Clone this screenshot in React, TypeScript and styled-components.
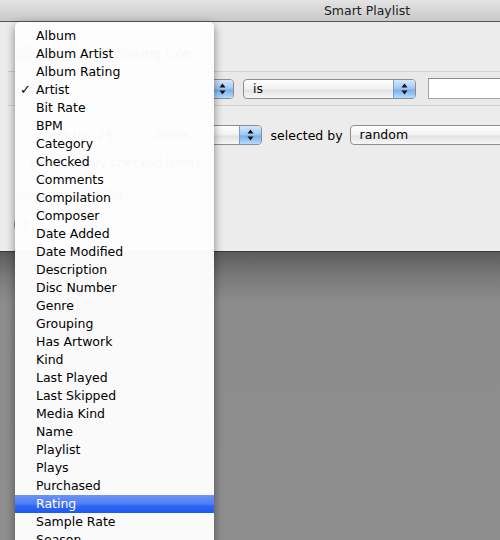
import styled, { createGlobalStyle } from "styled-components";

const GlobalStyle = createGlobalStyle`
  html, body {
    margin: 0;
    padding: 0;
    height: 100%;
    overflow: hidden;
    background: #8e8e8e;
  }
  body {
    font-family: "DejaVu Sans", "Liberation Sans", sans-serif;
    font-size: 12.5px;
    color: #000;
  }
`;

const fields = [
  "Album",
  "Album Artist",
  "Album Rating",
  "Artist",
  "Bit Rate",
  "BPM",
  "Category",
  "Checked",
  "Comments",
  "Compilation",
  "Composer",
  "Date Added",
  "Date Modified",
  "Description",
  "Disc Number",
  "Genre",
  "Grouping",
  "Has Artwork",
  "Kind",
  "Last Played",
  "Last Skipped",
  "Media Kind",
  "Name",
  "Playlist",
  "Plays",
  "Purchased",
  "Rating",
  "Sample Rate",
  "Season",
];

function Stepper() {
  return (
    <StepperCss>
      <svg width="7" height="12" viewBox="0 0 7 12">
        <path d="M3.5 0.5 L6.5 4.5 L0.5 4.5 Z" fill="#111" />
        <path d="M3.5 11.5 L6.5 7.5 L0.5 7.5 Z" fill="#111" />
      </svg>
    </StepperCss>
  );
}

function Popup({ label, width, gap = 0 }: { label: string; width: number; gap?: number }) {
  return (
    <PopupCss $width={width} $gap={gap}>
      <span>{label}</span>
      <Stepper />
    </PopupCss>
  );
}

export default function App() {
  return (
    <>
      <GlobalStyle />
      <Page>
        <Sheet>
          <TitleBar>Smart Playlist</TitleBar>
          <Content>
            <CheckRow $top={21}>
              <Box $checked />
              Match the following rule:
            </CheckRow>
            <RuleBox>
              <Popup label="Artist" width={216} />
              <Popup label="is" width={173} gap={9} />
              <TextField $width={220} $gap={12} />
            </RuleBox>
            <CheckRow $top={19}>
              <Box />
              Limit to
              <TextField $width={47} $gap={5}>25</TextField>
              <Popup label="items" width={117} gap={7} />
              <Label>selected by</Label>
              <Popup label="random" width={200} gap={7} />
            </CheckRow>
            <CheckRow $top={7}>
              <Box />
              Match only checked items
            </CheckRow>
            <CheckRow $top={11}>
              <Box $checked />
              Live updating
            </CheckRow>
            <HelpButton>?</HelpButton>
          </Content>
          <Backdrop />
        </Sheet>

        <Menu>
          {fields.map((name) => (
            <MenuItem key={name} $active={name === "Rating"}>
              <Check>{name === "Artist" ? "✓" : ""}</Check>
              {name}
            </MenuItem>
          ))}
        </Menu>
      </Page>
    </>
  );
}

const Page = styled.div`
  position: relative;
  width: 500px;
  height: 540px;
  overflow: hidden;
`;

const Sheet = styled.div`
  width: 734px;
  display: flex;
  flex-direction: column;
  height: 540px;
`;

const TitleBar = styled.div`
  height: 21px;
  border-bottom: 1px solid #565656;
  background: linear-gradient(to bottom, #e4e4e4, #c8c8c8);
  display: flex;
  align-items: center;
  justify-content: center;
  color: #222;
`;

const Content = styled.div`
  height: 230px;
  box-sizing: border-box;
  background: #ececec;
  border-bottom: 1px solid #3a3a3a;
  display: flex;
  flex-direction: column;
`;

const CheckRow = styled.div<{ $top: number }>`
  margin-top: ${(p) => p.$top}px;
  height: 20px;
  display: flex;
  align-items: center;
  padding-left: 17px;
  white-space: nowrap;
`;

const Box = styled.span<{ $checked?: boolean }>`
  width: 13px;
  height: 13px;
  margin-right: 6px;
  border-radius: 2px;
  border: 1px solid ${(p) => (p.$checked ? "#4a6fa8" : "#8e8e8e")};
  background: ${(p) =>
    p.$checked
      ? "linear-gradient(to bottom, #c9dcf5, #5d95e2)"
      : "linear-gradient(to bottom, #ffffff, #e6e6e6)"};
  flex-shrink: 0;
`;

const RuleBox = styled.div`
  margin-top: 8px;
  margin-left: 8px;
  height: 33px;
  border-top: 1px solid #cfcfcf;
  border-bottom: 1px solid #cfcfcf;
  background: #e9e9e9;
  display: flex;
  align-items: center;
  padding-left: 10px;
`;

const PopupCss = styled.div<{ $width: number; $gap: number }>`
  width: ${(p) => p.$width}px;
  margin-left: ${(p) => p.$gap}px;
  height: 20px;
  box-sizing: border-box;
  border: 1px solid #8d8d8d;
  border-radius: 4px;
  background: linear-gradient(to bottom, #ffffff 0%, #f1f1f1 50%, #e2e2e2 55%, #f7f7f7 100%);
  display: flex;
  align-items: stretch;
  overflow: hidden;
  flex-shrink: 0;
  span {
    flex: 1;
    padding-left: 9px;
    line-height: 18px;
  }
`;

const StepperCss = styled.div`
  width: 21px;
  border-left: 1px solid #7c9ccc;
  background: linear-gradient(to bottom, #d6e8fb 0%, #9cc6f2 50%, #75aeee 55%, #b9dcfb 100%);
  display: flex;
  align-items: center;
  justify-content: center;
`;

const TextField = styled.div<{ $width: number; $gap: number }>`
  width: ${(p) => p.$width}px;
  margin-left: ${(p) => p.$gap}px;
  height: 21px;
  box-sizing: border-box;
  border: 1px solid #a5a5a5;
  border-top-color: #8a8a8a;
  background: #fff;
  padding-left: 6px;
  line-height: 19px;
  flex-shrink: 0;
`;

const Label = styled.span`
  margin-left: 9px;
`;

const HelpButton = styled.div`
  margin-top: 10px;
  margin-left: 14px;
  width: 21px;
  height: 21px;
  border-radius: 50%;
  border: 1px solid #7a70a8;
  background: linear-gradient(to bottom, #ffffff, #dedede);
  display: flex;
  align-items: center;
  justify-content: center;
  font-size: 13px;
`;

const Backdrop = styled.div`
  flex: 1;
  background: linear-gradient(to bottom, #5b5b5b 0px, #7a7a7a 25px, #8c8c8c 50px, #8e8e8e 100%);
`;

const Menu = styled.div`
  position: absolute;
  left: 15px;
  top: 22px;
  width: 199px;
  padding-top: 5px;
  border-radius: 5px;
  background: rgba(253, 253, 253, 0.975);
  box-shadow: 0 3px 10px rgba(0, 0, 0, 0.45);
`;

const MenuItem = styled.div<{ $active?: boolean }>`
  height: 18px;
  line-height: 18px;
  display: flex;
  white-space: nowrap;
  color: ${(p) => (p.$active ? "#fff" : "#000")};
  background: ${(p) =>
    p.$active
      ? "linear-gradient(to bottom, #6d92f8 0%, #4f7ff6 50%, #2f66f3 60%, #1c5af2 100%)"
      : "transparent"};
`;

const Check = styled.span`
  width: 21px;
  padding-left: 5px;
  box-sizing: border-box;
  font-size: 13px;
`;
